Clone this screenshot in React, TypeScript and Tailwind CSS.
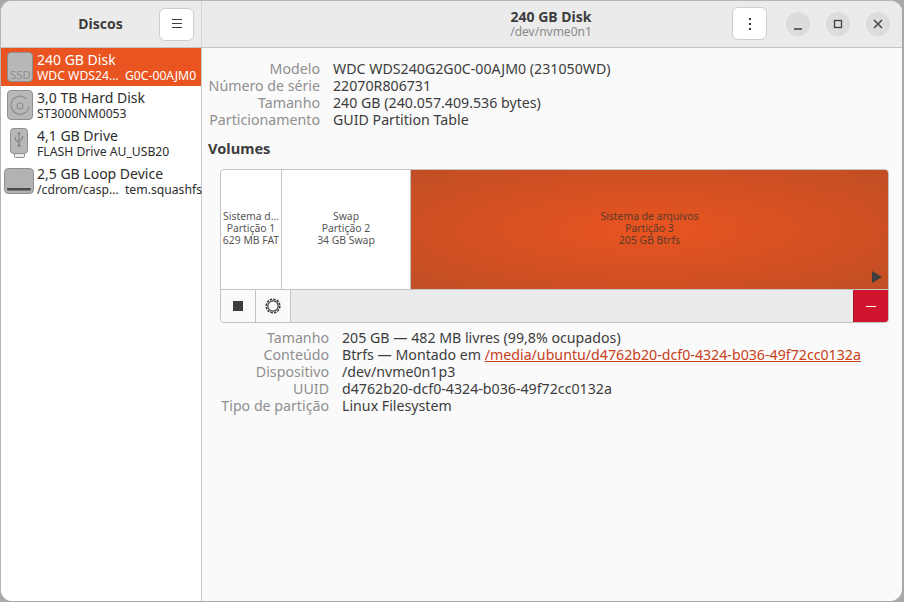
function Ssd() {
  return (
    <svg width="26" height="30" viewBox="0 0 26 30" className="overflow-visible">
      <rect x="0.5" y="0.5" width="25" height="29" rx="3.5" fill="#b7b7b7" stroke="#8f8f8f" />
      <text x="13.5" y="27" textAnchor="middle" fontSize="11.5" fontFamily="Noto Sans" fill="#8f8f8f">SSD</text>
    </svg>
  );
}
function Hdd() {
  return (
    <svg width="26" height="30" viewBox="0 0 26 30">
      <rect x="0.5" y="0.5" width="25" height="29" rx="3.5" fill="#b7b7b7" stroke="#8f8f8f" />
      <path d="M19 8.5A9 9 0 1 0 22 16" fill="none" stroke="#8f8f8f" strokeWidth="1.2" />
      <circle cx="13" cy="16" r="3" fill="none" stroke="#8f8f8f" strokeWidth="1.2" />
    </svg>
  );
}
function Usb() {
  return (
    <svg width="18" height="30" viewBox="0 0 18 30">
      <rect x="4.5" y="24.5" width="10" height="5" rx="1" fill="#ececec" stroke="#8f8f8f" />
      <rect x="0.5" y="0.5" width="17" height="25" rx="3" fill="#b7b7b7" stroke="#8f8f8f" />
      <path d="M9 5v12M5.5 9v3l3.5 2.5M12.5 8v2.5L9 13" fill="none" stroke="#858585" strokeWidth="1.2" />
      <path d="M9 3.5l-1.7 2.7h3.4z" fill="#858585" />
      <circle cx="9" cy="17.5" r="1.6" fill="#858585" />
    </svg>
  );
}
function Loop() {
  return (
    <svg width="30" height="26" viewBox="0 0 30 26">
      <rect x="0.5" y="0.5" width="29" height="25" rx="4" fill="#b2b2b2" stroke="#8f8f8f" />
      <rect x="3" y="20" width="24" height="2.5" rx="1" fill="#4a4a4a" />
    </svg>
  );
}

const disks = [
  { name: "240 GB Disk", sub: "WDC WDS24…  G0C-00AJM0", icon: <Ssd />, pad: "pl-[6px]", sel: true },
  { name: "3,0 TB Hard Disk", sub: "ST3000NM0053", icon: <Hdd />, pad: "pl-[6px]", sel: false },
  { name: "4,1 GB Drive", sub: "FLASH Drive AU_USB20", icon: <Usb />, pad: "pl-[9px]", sel: false },
  { name: "2,5 GB Loop Device", sub: "/cdrom/casp…  tem.squashfs", icon: <Loop />, pad: "pl-[3px]", sel: false },
];

const info = [
  ["Modelo", "WDC WDS240G2G0C-00AJM0 (231050WD)"],
  ["Número de série", "22070R806731"],
  ["Tamanho", "240 GB (240.057.409.536 bytes)"],
  ["Particionamento", "GUID Partition Table"],
];

export default function App() {
  return (
    <div className="w-[904px] h-[602px] bg-[#a8a8a8] overflow-hidden font-['Noto_Sans',sans-serif] text-[#3d3d3d]">
      <div className="w-[902px] h-[601px] flex flex-col bg-[#fafafa] rounded-[12px] overflow-hidden border-t border-l border-[#b5b5b5]">
        <header className="h-[47px] shrink-0 flex bg-[#ebebeb] border-b border-[#c4c4c4]">
          <div className="w-[201px] shrink-0 flex items-center border-r border-[#d5d5d5]">
            <span className="flex-1 text-center text-[14px] font-bold pl-[41px] pb-[2px]">Discos</span>
            <button className="w-[35px] h-[33px] mr-[7px] rounded-[6px] bg-white border border-[#cdcdcd] flex items-center justify-center">
              <svg width="12" height="10" viewBox="0 0 12 10"><path d="M1 .5h10M1 4.5h10M1 8.5h10" stroke="#3d3d3d" strokeWidth="1" /></svg>
            </button>
          </div>
          <div className="flex-1 flex items-center relative">
            <div className="flex-1 flex flex-col items-center leading-[15px] pr-[2px]">
              <span className="text-[14px] font-bold">240 GB Disk</span>
              <span className="text-[12px] text-[#8a8a8a]">/dev/nvme0n1</span>
            </div>
            <button className="absolute left-[530px] top-[6px] w-[35px] h-[33px] rounded-[6px] bg-white border border-[#cdcdcd] flex items-center justify-center">
              <svg width="4" height="12" viewBox="0 0 4 12"><path d="M2 0v2M2 5v2M2 10v2" stroke="#3d3d3d" strokeWidth="2" /></svg>
            </button>
            <div className="absolute right-[12px] top-[11px] flex gap-[16px]">
              {[
                <path d="M8 17h8" key="a" strokeWidth="1.4" />,
                <rect x="8.5" y="8.5" width="7" height="7" key="b" fill="none" strokeWidth="1.3" />,
                <path d="M8 8l8 8M16 8l-8 8" key="c" strokeWidth="1.4" />,
              ].map((p, i) => (
                <div key={i} className="w-[24px] h-[24px] rounded-full bg-[#dcdcdc]">
                  <svg width="24" height="24" viewBox="0 0 24 24" stroke="#3d3d3d">{p}</svg>
                </div>
              ))}
            </div>
          </div>
        </header>
        <div className="flex-1 flex min-h-0">
          <aside className="w-[201px] shrink-0 bg-white border-r border-[#c9c9c9] flex flex-col">
            {disks.map((d) => (
              <div key={d.name} className={`h-[38px] flex items-center ${d.sel ? "bg-[#e95420] text-white" : "text-[#2d2d2d]"}`}>
                <div className={`w-[36px] shrink-0 flex ${d.pad}`}>{d.icon}</div>
                <div className="flex flex-col whitespace-pre pb-[2px]">
                  <span className="text-[14px] leading-[19px]">{d.name}</span>
                  <span className="text-[12.2px] leading-[14px]">{d.sub}</span>
                </div>
              </div>
            ))}
          </aside>
          <main className="flex-1 pt-[12px] pl-[6px] pr-[12px] min-w-0">
            <div className="grid grid-cols-[112px_1fr] gap-x-[13px] text-[14.2px] leading-[17px]">
              {info.map(([l, v]) => (
                <div key={l} className="contents">
                  <span className="text-right text-[#8f8f8f] whitespace-nowrap">{l}</span>
                  <span className="whitespace-nowrap">{v}</span>
                </div>
              ))}
            </div>
            <h2 className="mt-[12px] text-[14.6px] leading-[17px] font-bold">Volumes</h2>
            <div className="mt-[12px] ml-[12px] w-[669px] h-[154px] rounded-[4px] border border-[#c4c4c4] flex flex-col overflow-hidden bg-[#ebebeb]">
              <div className="h-[120px] shrink-0 flex border-b border-[#c4c4c4] bg-white text-[10.4px] leading-[12px] text-[#555555] text-center">
                <div className="w-[61px] shrink-0 border-r border-[#c4c4c4] flex flex-col justify-center items-center whitespace-nowrap pb-[4px]">
                  <span>Sistema d…</span><span>Partição 1</span><span>629 MB FAT</span>
                </div>
                <div className="w-[129px] shrink-0 border-r border-[#c4c4c4] flex flex-col justify-center pb-[4px]">
                  <span>Swap</span><span>Partição 2</span><span>34 GB Swap</span>
                </div>
                <div className="flex-1 relative flex flex-col justify-center pb-[4px] bg-[radial-gradient(ellipse_at_center,#e95420_0%,#c14e25_100%)] text-[#5a3a2a]">
                  <span>Sistema de arquivos</span><span>Partição 3</span><span>205 GB Btrfs</span>
                  <svg className="absolute right-[5px] bottom-[5px]" width="12" height="14" viewBox="0 0 12 14"><path d="M1 1l10 6-10 6z" fill="#3d3d3d" /></svg>
                </div>
              </div>
              <div className="flex-1 flex">
                <button className="w-[35px] bg-[#fafafa] border-r border-[#c4c4c4] flex items-center justify-center">
                  <span className="w-[10px] h-[10px] bg-[#3d3d3d]" />
                </button>
                <button className="w-[35px] bg-[#fafafa] border-r border-[#c4c4c4] flex items-center justify-center">
                  <svg width="16" height="16" viewBox="0 0 16 16" fill="none" stroke="#3d3d3d">
                    <circle cx="8" cy="8" r="5.2" strokeWidth="1.2" />
                    <circle cx="8" cy="8" r="6.8" strokeWidth="1.6" strokeDasharray="2.4 1.17" />
                  </svg>
                </button>
                <div className="flex-1" />
                <button className="w-[35px] bg-[#d1152f] border-l border-[#a8132a] flex items-center justify-center">
                  <span className="w-[10px] h-px bg-white" />
                </button>
              </div>
            </div>
            <div className="mt-[6px] ml-[12px] grid grid-cols-[109px_1fr] gap-x-[13px] text-[14.2px] leading-[17px]">
              <span className="text-right text-[#8f8f8f]">Tamanho</span>
              <span>205 GB — 482 MB livres (99,8% ocupados)</span>
              <span className="text-right text-[#8f8f8f]">Conteúdo</span>
              <span className="whitespace-nowrap">Btrfs — Montado em <a className="text-[#c7401a] underline">/media/ubuntu/d4762b20-dcf0-4324-b036-49f72cc0132a</a></span>
              <span className="text-right text-[#8f8f8f]">Dispositivo</span>
              <span>/dev/nvme0n1p3</span>
              <span className="text-right text-[#8f8f8f]">UUID</span>
              <span>d4762b20-dcf0-4324-b036-49f72cc0132a</span>
              <span className="text-right text-[#8f8f8f] whitespace-nowrap">Tipo de partição</span>
              <span>Linux Filesystem</span>
            </div>
          </main>
        </div>
      </div>
    </div>
  );
}
